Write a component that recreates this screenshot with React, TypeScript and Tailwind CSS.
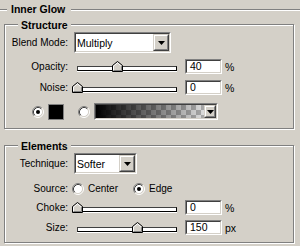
import React from 'react';

const font = "font-['Liberation_Sans',Arial,sans-serif]";

function Sunken({ className, children }: { className?: string; children?: React.ReactNode }) {
    return (
        <div className={`border border-t-[#808080] border-l-[#808080] border-b-white border-r-white ${className ?? ''}`}>
            <div className="w-full h-full border border-t-[#404040] border-l-[#404040] border-b-[#d4d0c8] border-r-[#d4d0c8] bg-white flex items-center">
                {children}
            </div>
        </div>
    );
}

function ArrowButton({ className }: { className?: string }) {
    return (
        <div className={`h-full border border-t-[#d4d0c8] border-l-[#d4d0c8] border-b-[#404040] border-r-[#404040] ${className ?? ''}`}>
            <div className="w-full h-full border border-t-white border-l-white border-b-[#808080] border-r-[#808080] bg-[#d4d0c8] flex items-center justify-center">
                <svg width="7" height="4" viewBox="0 0 7 4">
                    <path d="M0 0h7L3.5 4z" fill="#000" />
                </svg>
            </div>
        </div>
    );
}

function Select({ value, width }: { value: string; width: string }) {
    return (
        <Sunken className={`${width} h-[21px]`}>
            <span className="flex-1 pl-[1px] text-[10.5px] leading-[12px] text-black">{value}</span>
            <ArrowButton className="w-[16px]" />
        </Sunken>
    );
}

function Radio({ checked }: { checked?: boolean }) {
    return (
        <svg width="12" height="12" viewBox="0 0 12 12" className="shrink-0">
            <circle cx="6" cy="6" r="4.5" fill="#fff" />
            <path d="M2.11 9.89A5.5 5.5 0 0 1 9.89 2.11" stroke="#808080" fill="none" />
            <path d="M9.89 2.11A5.5 5.5 0 0 1 2.11 9.89" stroke="#fff" fill="none" />
            <path d="M2.82 9.18A4.5 4.5 0 0 1 9.18 2.82" stroke="#404040" fill="none" />
            <path d="M9.18 2.82A4.5 4.5 0 0 1 2.82 9.18" stroke="#d4d0c8" fill="none" />
            {checked && <circle cx="6" cy="6" r="2" fill="#000" />}
        </svg>
    );
}

function Slider({ pct }: { pct: number }) {
    return (
        <div className="relative w-[110px] h-[11px] flex items-end">
            <div className="mx-[5px] mb-[1px] flex-1 h-[5px] border border-t-[#404040] border-l-[#404040] border-b-black border-r-black bg-white shadow-[0_1px_0_#fff]" />
            <svg width="11" height="11" viewBox="0 0 11 11" className="absolute top-0" style={{ left: Math.round(pct) }}>
                <polygon points="0.5,10.5 0.5,4.5 5.5,0.5 10.5,4.5 10.5,10.5" fill="#d4d0c8" />
                <polyline points="1.5,9.5 1.5,5 5.5,1.8 9.5,5" stroke="#fff" fill="none" />
                <polyline points="9.5,5.2 9.5,9.5 1.5,9.5" stroke="#808080" fill="none" />
                <polygon points="0.5,10.5 0.5,4.5 5.5,0.5 10.5,4.5 10.5,10.5" stroke="#000" fill="none" />
            </svg>
        </div>
    );
}

function Label({ children }: { children: React.ReactNode }) {
    return <div className="w-[63px] shrink-0 text-right whitespace-nowrap text-[10px] leading-[12px] text-black">{children}</div>;
}

function SliderRow({ label, pct, value, unit }: { label: string; pct: number; value: string; unit: string }) {
    return (
        <div className="flex items-center h-[15px]">
            <Label>{label}</Label>
            <div className="ml-[4px]">
                <Slider pct={pct} />
            </div>
            <Sunken className="ml-[3px] w-[37px] h-[15px]">
                <span className="pl-[3px] text-[10.5px] leading-[11px] text-black">{value}</span>
            </Sunken>
            <span className="ml-[3px] text-[10.5px] leading-[12px] text-black">{unit}</span>
        </div>
    );
}

function GroupBox({ title, className, children }: { title: string; className?: string; children: React.ReactNode }) {
    return (
        <div className={`relative ml-[4px] w-[290px] border border-[#808080] shadow-[1px_1px_0_#fff,inset_1px_1px_0_#fff] ${className ?? ''}`}>
            <div className="absolute left-[13px] -top-[6px] px-[3px] bg-[#d4d0c8] text-[10.5px] leading-[12px] font-bold text-black">{title}</div>
            {children}
        </div>
    );
}

export default function App() {
    return (
        <div className={`w-[300px] h-[246px] bg-[#d4d0c8] overflow-hidden ${font}`}>
            {/* Inner Glow header */}
            <div className="flex items-center h-[13px] mt-[3px]">
                <div className="w-[7px] h-[2px] border-t border-t-[#808080] border-b border-b-white" />
                <span className="ml-[4px] text-[10.5px] leading-[13px] font-bold text-black">Inner Glow</span>
                <div className="ml-[6px] flex-1 h-[2px] border-t border-t-[#808080] border-b border-b-white" />
            </div>

            {/* Structure */}
            <GroupBox title="Structure" className="mt-[8px] pt-[7px] pb-[8px]">
                <div className="flex items-center h-[21px]">
                    <Label>Blend Mode:</Label>
                    <div className="ml-[6px]">
                        <Select value="Multiply" width="w-[97px]" />
                    </div>
                </div>
                <div className="mt-[6px]">
                    <SliderRow label="Opacity:" pct={40} value="40" unit="%" />
                </div>
                <div className="mt-[6px]">
                    <SliderRow label="Noise:" pct={0} value="0" unit="%" />
                </div>
                <div className="mt-[8px] flex items-center h-[17px]">
                    <div className="ml-[27px]">
                        <Radio checked />
                    </div>
                    <div className="ml-[4px] w-[16px] h-[16px] border border-[#808080] bg-black" />
                    <div className="ml-[14px]">
                        <Radio />
                    </div>
                    <div className="ml-[4px] w-[124px] h-[17px] border border-t-[#808080] border-l-[#808080] border-b-white border-r-white">
                        <div className="w-full h-full border border-t-[#404040] border-l-[#404040] border-b-[#d4d0c8] border-r-[#d4d0c8] flex">
                            <div className="flex-1 bg-[linear-gradient(to_right,#000,rgba(0,0,0,0)),repeating-conic-gradient(#a8a8a8_0%_25%,#dcdcdc_0%_50%)] bg-[length:100%_100%,10px_10px]" />
                            <ArrowButton className="w-[12px]" />
                        </div>
                    </div>
                </div>
            </GroupBox>

            {/* Elements */}
            <GroupBox title="Elements" className="mt-[16px] pt-[7px] pb-[7px]">
                <div className="flex items-center h-[21px]">
                    <Label>Technique:</Label>
                    <div className="ml-[6px]">
                        <Select value="Softer" width="w-[63px]" />
                    </div>
                </div>
                <div className="mt-[9px] flex items-center h-[12px]">
                    <Label>Source:</Label>
                    <div className="ml-[4px]">
                        <Radio />
                    </div>
                    <span className="ml-[4px] text-[10px] leading-[12px] text-black">Center</span>
                    <div className="ml-[15px]">
                        <Radio checked />
                    </div>
                    <span className="ml-[4px] text-[10px] leading-[12px] text-black">Edge</span>
                </div>
                <div className="mt-[5px]">
                    <SliderRow label="Choke:" pct={0} value="0" unit="%" />
                </div>
                <div className="mt-[5px]">
                    <SliderRow label="Size:" pct={60} value="150" unit="px" />
                </div>
            </GroupBox>
        </div>
    );
}
